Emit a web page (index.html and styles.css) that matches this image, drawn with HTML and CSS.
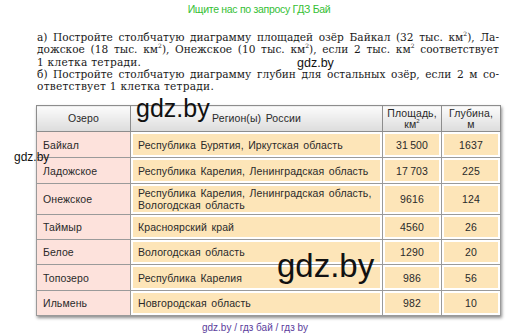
FILE: index.html
```html
<!DOCTYPE html>
<html lang="ru">
<head>
<meta charset="utf-8">
<link rel="stylesheet" href="styles.css">
</head>
<body>
<div class="page">
  <div class="promo">Ищите нас по запросу ГДЗ Бай</div>
  <div class="task">
    <span class="ln j">а) Постройте столбчатую диаграмму площадей озёр Байкал (32 тыс. км<sup>2</sup>), Ла-</span>
    <span class="ln j">дожское (18 тыс. км<sup>2</sup>), Онежское (10 тыс. км<sup>2</sup>), если 2 тыс. км<sup>2</sup> соответствует</span>
    <span class="ln">1 клетка тетради.</span>
    <span class="ln j">б) Постройте столбчатую диаграмму глубин для остальных озёр, если 2 м со-</span>
    <span class="ln">ответствует 1 клетка тетради.</span>
  </div>
  <table class="lakes">
    <colgroup>
      <col class="c1"><col class="c2"><col class="c3"><col class="c4">
    </colgroup>
    <thead>
      <tr><th>Озеро</th><th>Регион(ы) России</th><th>Площадь,<br>км<sup>2</sup></th><th>Глубина,<br>м</th></tr>
    </thead>
    <tbody>
      <tr class="r1"><td class="name">Байкал</td><td class="reg">Республика Бурятия, Иркутская область</td><td class="num">31&#8201;500</td><td class="num">1637</td></tr>
      <tr class="r2"><td class="name">Ладожское</td><td class="reg">Республика Карелия, Ленинградская область</td><td class="num">17&#8201;703</td><td class="num">225</td></tr>
      <tr class="r3"><td class="name">Онежское</td><td class="reg">Республика Карелия, Ленинградская область,<br>Вологодская область</td><td class="num">9616</td><td class="num">124</td></tr>
      <tr class="r4"><td class="name">Таймыр</td><td class="reg">Красноярский край</td><td class="num">4560</td><td class="num">26</td></tr>
      <tr class="r5"><td class="name">Белое</td><td class="reg">Вологодская область</td><td class="num">1290</td><td class="num">20</td></tr>
      <tr class="r6"><td class="name">Топозеро</td><td class="reg">Республика Карелия</td><td class="num">986</td><td class="num">56</td></tr>
      <tr class="r7"><td class="name">Ильмень</td><td class="reg">Новгородская область</td><td class="num">982</td><td class="num">10</td></tr>
    </tbody>
  </table>
  <div class="footer">gdz.by / гдз бай / гдз by</div>
  <div class="wm wm-top">gdz.by</div>
  <div class="wm wm-head">gdz.by</div>
  <div class="wm wm-left">gdz.by</div>
  <div class="wm wm-big">gdz.by</div>
</div>
</body>
</html>
```

FILE: styles.css
```css
html, body {
  margin: 0;
  padding: 0;
  background: #fff;
}
.page {
  position: relative;
  width: 518px;
  height: 334px;
  overflow: hidden;
}
.promo {
  text-align: center;
  font-family: "Liberation Sans Narrow", "Liberation Sans", Arial, sans-serif;
  font-size: 10.5px;
  color: #35c035;
  padding-top: 3px;
  height: 14px;
  letter-spacing: -0.3px;
}
.task {
  margin: 14px 0 0 37px;
  width: 462px;
  font-family: "DejaVu Serif", serif;
  font-size: 10.6px;
  line-height: 12.3px;
  color: #1a1a1a;
}
.task .ln {
  display: block;
  white-space: nowrap;
  letter-spacing: 0.25px;
}
.task .ln.j {
  text-align: justify;
  text-align-last: justify;
  white-space: normal;
  letter-spacing: 0;
}
.task sup, .lakes sup {
  font-size: 6px;
  line-height: 0;
  vertical-align: 5px;
  letter-spacing: 0;
}
.lakes {
  margin: 13px 0 0 36px;
  width: 464px;
  border-collapse: collapse;
  table-layout: fixed;
  font-family: "Liberation Sans", Arial, sans-serif;
  font-size: 10.5px;
  letter-spacing: 0.1px;
  word-spacing: 1.5px;
  color: #2a2a2a;
  box-shadow: 1px 2px 3px rgba(0,0,0,0.45);
}
.c1 { width: 94px; }
.c2 { width: 252px; }
.c3 { width: 59px; }
.c4 { width: 59px; }
.lakes th {
  height: 25px;
  padding: 0;
  font-weight: normal;
  line-height: 11px;
  background: linear-gradient(#fbfbfb, #dcdcdc);
  border: 1px solid #8d8d8d;
  text-align: center;
}
.lakes td {
  padding: 0 0 0 6px;
  border: 1px solid #9a9a9a;
  line-height: 12px;
  white-space: nowrap;
}
.lakes td.name {
  background: #fde2dc;
}
.lakes td.reg, .lakes td.num {
  background: #fde5b8;
  box-shadow: inset 0 0 0 2px #fff;
}
.lakes td.reg {
  padding-left: 7px;
}
.lakes td.num {
  text-align: center;
  padding: 0;
}
.r1 td { height: 25px; }
.r2 td { height: 25px; }
.r3 td { height: 30px; }
.r4 td { height: 24px; }
.r5 td { height: 24px; }
.r6 td { height: 25px; }
.r7 td { height: 24px; }
.footer {
  margin-top: 6px;
  text-align: center;
  font-family: "Liberation Sans Narrow", "Liberation Sans", Arial, sans-serif;
  font-size: 10px;
  color: #5b3d9c;
  padding-right: 8px;
}
.wm {
  position: absolute;
  font-family: "Liberation Sans", Arial, sans-serif;
  color: #111;
  line-height: 1;
}
.wm-top { left: 297px; top: 57px; font-size: 12.5px; }
.wm-head { left: 136px; top: 96px; font-size: 25px; }
.wm-left { left: 14px; top: 151px; font-size: 12px; }
.wm-big { left: 277px; top: 249px; font-size: 33px; }
```
